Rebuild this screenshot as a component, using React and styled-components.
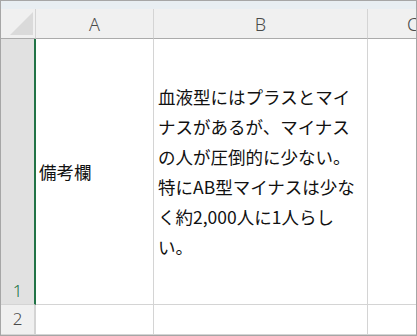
import styled, { createGlobalStyle } from "styled-components"

const GlobalStyle = createGlobalStyle`
  html, body {
    margin: 0;
    padding: 0;
    background: #ffffff;
  }
`

const Frame = styled.div`
  width: 417px;
  height: 336px;
  box-sizing: border-box;
  border: 1px solid #a6a6a6;
  background: #ffffff;
  overflow: hidden;
  font-family: "Noto Sans CJK JP", "Noto Sans", sans-serif;
`

const TopStrip = styled.div`
  height: 8px;
  background: #e8eef2;
`

const Sheet = styled.div`
  display: grid;
  grid-template-columns: 35px 118px 214px 48px;
  grid-template-rows: 30px 266px 30px;
`

const Corner = styled.div`
  box-sizing: border-box;
  background: #f0f0f0;
  border-bottom: 1px solid #ababab;
  border-right: 1px solid #d4d4d4;
  display: flex;
  align-items: flex-end;
  justify-content: flex-end;
  padding: 0 2px 3px 0;
`

const ColHeader = styled.div`
  box-sizing: border-box;
  background: #f0f0f0;
  border-bottom: 1px solid #ababab;
  border-right: ${(p) => (p.$last ? "none" : "1px solid #d4d4d4")};
  display: flex;
  align-items: center;
  justify-content: ${(p) => (p.$last ? "flex-start" : "center")};
  padding-left: ${(p) => (p.$last ? "39px" : "0")};
  color: #4a4a4a;
  font-family: "Noto Sans", "Open Sans", sans-serif;
  font-size: 18px;
  font-weight: 300;
  line-height: 1;
  overflow: hidden;
  white-space: nowrap;
`

const RowHeader = styled.div`
  box-sizing: border-box;
  background: ${(p) => (p.$selected ? "#e1e1e1" : "#f0f0f0")};
  border-right: 2px solid ${(p) => (p.$selected ? "#217346" : "#d4d4d4")};
  border-bottom: 1px solid #d4d4d4;
  display: flex;
  align-items: ${(p) => (p.$selected ? "flex-end" : "center")};
  justify-content: center;
  padding-bottom: ${(p) => (p.$selected ? "3px" : "0")};
  color: ${(p) => (p.$selected ? "#217346" : "#4a4a4a")};
  font-family: "Noto Sans", "Open Sans", sans-serif;
  font-size: 17px;
  font-weight: 300;
  line-height: 1.1;
`

const Cell = styled.div`
  box-sizing: border-box;
  border-right: ${(p) => (p.$last ? "none" : "1px solid #d4d4d4")};
  border-bottom: 1px solid #d4d4d4;
  display: flex;
  align-items: center;
  padding: 0 5px 0 ${(p) => p.$pad || 3}px;
  color: #111111;
  font-size: 17.5px;
  line-height: 30px;
  overflow: hidden;
`

const WrapText = styled.div`
  width: 204px;
  line-break: strict;
`

const SelectAll = () => (
  <svg width="23" height="23" viewBox="0 0 23 23">
    <polygon points="23,0 23,23 0,23" fill="#dadada" />
  </svg>
)

export default function App() {
  return (
    <>
      <GlobalStyle />
      <Frame>
        <TopStrip />
        <Sheet>
          <Corner>
            <SelectAll />
          </Corner>
          <ColHeader>A</ColHeader>
          <ColHeader>B</ColHeader>
          <ColHeader $last>C</ColHeader>

          <RowHeader $selected>1</RowHeader>
          <Cell>備考欄</Cell>
          <Cell $pad={4}>
            <WrapText>
              血液型にはプラスとマイナスがあるが、マイナスの人が圧倒的に少ない。特にAB型マイナスは少なく約2,000人に1人らしい。
            </WrapText>
          </Cell>
          <Cell $last />

          <RowHeader>2</RowHeader>
          <Cell />
          <Cell />
          <Cell $last />
        </Sheet>
      </Frame>
    </>
  )
}
